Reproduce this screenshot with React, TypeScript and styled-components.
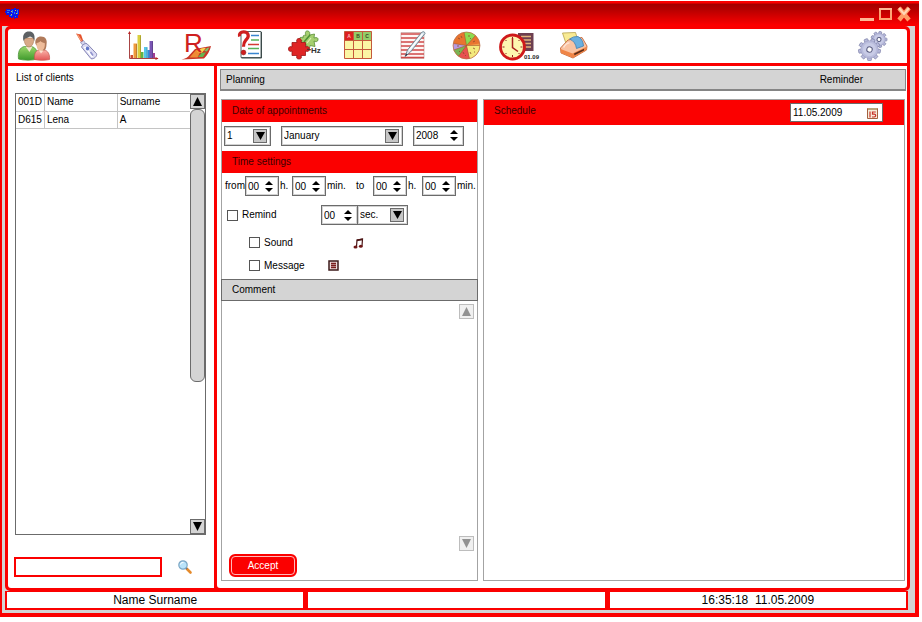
import React from "react";
import styled, { createGlobalStyle } from "styled-components";

const RED = "#fb0000";
const GREY = "#d4d4d4";
const LINE = "#6b6b6b";
const SOFT = "#a3a3a3";

const GlobalStyle = createGlobalStyle`
  *, *::before, *::after { box-sizing: border-box; }
  html, body { margin: 0; background: #fff; }
  body, button, input, select, textarea {
    font-family: "Liberation Sans", Arial, sans-serif;
    font-size: 10px;
    line-height: 12px;
    color: #000;
  }
  button { padding: 0; border: 0; background: none; cursor: pointer; }
  svg { display: block; flex: none; overflow: visible; }
`;

/* ---------- window frame ---------- */

const Page = styled.div`
  height: 100vh;
  padding: 1px 3px 5px 0;
`;

const Window = styled.div`
  display: flex;
  flex-direction: column;
  height: 100%;
  padding: 0 4px 4px 2px;
  background: ${RED};
`;

const TitleBar = styled.header`
  display: flex;
  align-items: center;
  justify-content: space-between;
  flex: none;
  height: 25px;
  margin: 0 -4px 0 -2px;
  padding: 0 8px 0 5px;
  background: linear-gradient(${RED} 2px, #a30000 3px, #b80000 9px, ${RED} 24px);
`;

const WindowControls = styled.div`
  display: flex;
  gap: 5px;
`;

const Frame = styled.div`
  display: flex;
  flex-direction: column;
  flex: 1;
  min-height: 0;
  padding: 0 5px 3px 3px;
  background: ${GREY};
`;

const Shell = styled.div`
  display: flex;
  flex-direction: column;
  flex: 1;
  min-height: 0;
  border: 3px solid ${RED};
  border-radius: 5px;
  background: ${RED};
`;

const Toolbar = styled.nav`
  display: flex;
  align-items: center;
  flex: none;
  height: 34px;
  margin-bottom: 3px;
  padding-right: 7px;
  border-radius: 3px 3px 0 0;
  background: #fff;
`;

const ToolButton = styled.button<{ $last?: boolean }>`
  display: flex;
  justify-content: center;
  width: 54px;
  margin-left: ${(p) => (p.$last ? "auto" : "0")};
`;

const Body = styled.div`
  display: grid;
  grid-template-columns: 206px 1fr;
  gap: 3px;
  flex: 1;
  min-height: 0;
`;

/* ---------- client list ---------- */

const Sidebar = styled.aside`
  display: flex;
  flex-direction: column;
  padding: 6px 8px 11px 7px;
  background: #fff;
  border-radius: 0 0 0 3px;
`;

const SidebarTitle = styled.h2`
  margin: 0 0 9px 1px;
  font-size: 10px;
  font-weight: normal;
`;

const ClientBox = styled.div`
  display: flex;
  flex: 1;
  min-height: 0;
  border: 1px solid ${LINE};
`;

const ClientTable = styled.table`
  flex: 1;
  align-self: flex-start;
  border-collapse: collapse;
  table-layout: fixed;
  th, td {
    height: 17px;
    padding: 0 2px;
    border-bottom: 1px solid #c4c4c4;
    border-right: 1px solid #c4c4c4;
    font-weight: normal;
    text-align: left;
    white-space: nowrap;
  }
  th:first-child { width: 28px; }
  th:nth-child(2) { width: 73px; }
  th:last-child { width: 73px; }
  th:last-child, td:last-child { border-right: 0; }
`;

const ScrollTrack = styled.div`
  display: flex;
  flex-direction: column;
  flex: none;
  width: 15px;
`;

const ScrollThumb = styled.div`
  height: 62%;
  margin-bottom: auto;
  border: 1px solid ${LINE};
  border-radius: 6px;
  background: ${GREY};
`;

const ArrowButton = styled.button<{ $muted?: boolean }>`
  display: grid;
  place-items: center;
  flex: none;
  width: 15px;
  height: 15px;
  border: 1px solid ${(p) => (p.$muted ? "#bdbdbd" : LINE)};
  background: ${(p) => (p.$muted ? "#f0f0f0" : GREY)};
  color: ${(p) => (p.$muted ? "#929292" : "#000")};
`;

const SearchRow = styled.form`
  display: flex;
  align-items: center;
  gap: 16px;
  margin: 22px 0 0 -1px;
`;

const SearchInput = styled.input`
  flex: 1;
  min-width: 0;
  height: 20px;
  margin: 0;
  padding: 0 4px;
  border: 2px solid ${RED};
  background: #fff;
`;

const SearchButton = styled.button`
  margin-right: 14px;
`;

/* ---------- planning area ---------- */

const Main = styled.main`
  display: flex;
  flex-direction: column;
  gap: 8px;
  min-width: 0;
  padding: 3px 1px 7px 3px;
  background: #fff;
  border-radius: 0 0 3px 3px;
`;

const PlanningBar = styled.div`
  display: flex;
  align-items: center;
  justify-content: space-between;
  flex: none;
  height: 22px;
  padding: 0 42px 0 5px;
  border: 1px solid #858585;
  border-bottom-width: 2px;
  background: ${GREY};
`;

const Columns = styled.div`
  display: grid;
  grid-template-columns: 257px 1fr;
  gap: 5px;
  flex: 1;
  min-height: 0;
  padding: 0 1px;
`;

const Panel = styled.section`
  display: flex;
  flex-direction: column;
  min-width: 0;
  border: 1px solid ${SOFT};
  background: #fff;
`;

const RedHeading = styled.h3`
  display: flex;
  align-items: center;
  flex: none;
  height: 22px;
  margin: 0;
  padding-left: 10px;
  background: ${RED};
  color: #3a0000;
  font-size: 10px;
  font-weight: normal;
`;

const CommentHeading = styled.h3`
  display: flex;
  align-items: center;
  flex: none;
  height: 22px;
  margin: 0 -1px;
  padding-left: 10px;
  border: 1px solid ${LINE};
  background: ${GREY};
  font-size: 10px;
  font-weight: normal;
`;

const DateRow = styled.div`
  display: flex;
  align-items: center;
  height: 29px;
  gap: 10px;
  padding: 0 13px 2px 2px;
`;

const TimeRow = styled.div`
  display: flex;
  align-items: center;
  height: 26px;
  padding-left: 3px;
`;

const TimeGroup = styled.div`
  display: flex;
  align-items: center;
  gap: 1px;
`;

const UnitLabel = styled.span<{ $w: number }>`
  width: ${(p) => p.$w}px;
  white-space: nowrap;
`;

const SelectBox = styled.div<{ $grow?: boolean; $w?: number }>`
  display: grid;
  align-items: center;
  grid-template-columns: 1fr 15px;
  flex: ${(p) => (p.$grow ? "1" : "none")};
  width: ${(p) => (p.$w ? `${p.$w}px` : "auto")};
  height: 20px;
  padding-right: 2px;
  border: 1px solid ${LINE};
  outline: 1px solid #d2d2d2;
  outline-offset: -2px;
  background: #fff;
`;

const Select = styled.select`
  grid-area: 1 / 1 / 2 / 3;
  width: 100%;
  height: 18px;
  padding: 0 16px 0 2px;
  border: 0;
  appearance: none;
  background: transparent;
`;

const SelectArrow = styled.span`
  display: grid;
  place-items: center;
  grid-area: 1 / 2;
  width: 14px;
  height: 14px;
  border: 1px solid ${LINE};
  background: #c6c6c6;
  pointer-events: none;
`;

const StepperBox = styled.div<{ $w: number }>`
  display: flex;
  align-items: center;
  flex: none;
  width: ${(p) => p.$w}px;
  height: 20px;
  padding-right: 5px;
  border: 1px solid ${LINE};
  outline: 1px solid #d2d2d2;
  outline-offset: -2px;
  background: #fff;
`;

const StepperInput = styled.input`
  flex: 1;
  width: 0;
  min-width: 0;
  height: 18px;
  padding: 0 0 0 2px;
  border: 0;
  background: transparent;
`;

const StepButtons = styled.span`
  display: flex;
  flex-direction: column;
  gap: 3px;
  button { display: block; height: 4px; }
`;

const RemindRow = styled.div`
  display: flex;
  align-items: center;
  justify-content: space-between;
  height: 32px;
  padding: 0 69px 0 5px;
`;

const Joined = styled.div`
  display: flex;
  & > * + * { margin-left: -1px; }
`;

const OptionRow = styled.div<{ $gap: number }>`
  display: flex;
  align-items: center;
  height: 23px;
  gap: ${(p) => p.$gap}px;
  padding-left: 27px;
`;

const CheckLabel = styled.label`
  display: flex;
  align-items: center;
  gap: 4px;
`;

const CheckBox = styled.input`
  appearance: none;
  width: 11px;
  height: 11px;
  margin: 0;
  border: 1px solid #555;
  background: #fff;
  &:checked { background: ${RED}; }
`;

const OptionList = styled.div`
  padding-bottom: 2px;
`;

const CommentArea = styled.div`
  display: flex;
  flex: 1;
  min-height: 0;
  padding: 3px 3px 30px 3px;
`;

const CommentText = styled.textarea`
  flex: 1;
  min-width: 0;
  padding: 2px;
  border: 0;
  resize: none;
  background: transparent;
`;

const CommentScroll = styled.div`
  display: flex;
  flex-direction: column;
  justify-content: space-between;
`;

const FormFooter = styled.div`
  display: flex;
  flex: none;
  margin-top: -27px;
  padding: 0 0 3px 7px;
`;

const AcceptButton = styled.button`
  width: 68px;
  height: 23px;
  border: 2px solid ${RED};
  border-radius: 6px;
  outline: 1px solid #ffb9b9;
  outline-offset: -3px;
  background: ${RED};
  color: #fff;
`;

const ScheduleHeader = styled.div`
  display: flex;
  align-items: flex-start;
  justify-content: space-between;
  flex: none;
  height: 25px;
  padding: 3px 21px 3px 0;
  background: ${RED};
`;

const ScheduleTitle = styled.h3`
  margin: 2px 0 0 10px;
  color: #3a0000;
  font-size: 10px;
  font-weight: normal;
`;

const DateField = styled.div`
  display: flex;
  align-items: center;
  width: 93px;
  height: 19px;
  padding-right: 4px;
  border: 1px solid ${LINE};
  background: #fff;
`;

/* ---------- status bar ---------- */

const StatusBar = styled.footer`
  display: grid;
  grid-template-columns: 1fr 1fr 1fr;
  gap: 5px;
  flex: none;
  height: 19px;
  margin-right: 2px;
  padding: 1px 2px 2px 2px;
  background: ${RED};
`;

const StatusCell = styled.div`
  display: grid;
  place-items: center;
  background: #fff;
  font-size: 12px;
  line-height: 16px;
  white-space: pre;
`;

/* ---------- small glyphs ---------- */

const Triangle = ({ up, w = 9, h = 9 }: { up?: boolean; w?: number; h?: number }) => (
  <svg width={w} height={h} viewBox="0 0 8 8" preserveAspectRatio="none" fill="currentColor">
    <path d={up ? "M4 0 8 8H0Z" : "M0 0H8L4 8Z"} />
  </svg>
);

const AppLogo = () => (
  <svg width="15" height="13" viewBox="0 0 15 13" shapeRendering="crispEdges">
    <path fill="#0a16e8" d="M1 2h4v1h1V2h3V1h2v1h3v6h-1v3h-3v1H9v-2H8v1H6v-1H4V8H1V6H0V4h1z" />
    <path fill="#2c7ff0" d="M2 3h3v1H2zM2 5h2v1H2zM7 3h1v3H7zM9 5h1v2H9zM12 3h1v4h-1zM5 8h2v1H5zM10 9h1v1h-1z" />
    <path fill="#d7cf45" d="M6 4h1v1H6zM10 3h1v1h-1zM11 6h1v1h-1zM6 7h1v1H6z" />
  </svg>
);

const PEACH = "#ffb794";

const MinimizeIcon = () => (
  <svg width="14" height="14" viewBox="0 0 14 14">
    <path fill={PEACH} d="M0 11h14v3H0z" />
  </svg>
);
const MaximizeIcon = () => (
  <svg width="13" height="14" viewBox="0 0 13 14">
    <path fill="none" stroke="#ffa574" strokeWidth="2" d="M1 2h11v10H1z" />
    <path fill={PEACH} d="M0 1h13v2H0z" />
  </svg>
);
const CloseIcon = () => (
  <svg width="14" height="14" viewBox="0 0 14 14">
    <path stroke="#ff9c66" strokeWidth="4.4" d="M2 1 12 13M12 1 2 13" />
    <path stroke="#ffd7b8" strokeWidth="2" d="m2 1 5 6 5-6" fill="none" />
  </svg>
);

const SearchIcon = () => (
  <svg width="14" height="14" viewBox="0 0 14 14">
    <path d="m8.500 8.500 4 4" stroke="#e58a2b" strokeWidth="2.600" strokeLinecap="round" />
    <path d="m7.500 7.500 1.500 1.500" stroke="#667" strokeWidth="1.500" />
    <circle cx="5" cy="5" r="4.200" fill="#b9e3fa" stroke="#7ba6c4" strokeWidth="1.200" />
    <path d="M2.500 4.500a2.500 2.500 0 0 1 3-2" stroke="#fff" fill="none" />
  </svg>
);

const MusicIcon = () => (
  <svg width="11" height="12" viewBox="0 0 11 12">
    <path d="M3.500 9.500 4 3l5.500-1-.5 7" fill="none" stroke="#4c1515" strokeWidth="1.200" />
    <path d="m3.800 2.500 5.900-1v1.800l-5.900 1z" fill="#4c1515" />
    <ellipse cx="2.500" cy="10" rx="2" ry="1.600" fill="#6d1717" />
    <ellipse cx="7.800" cy="9.300" rx="1.900" ry="1.500" fill="#6d1717" />
  </svg>
);

const MessageIcon = () => (
  <svg width="11" height="11" viewBox="0 0 11 11">
    <path d="M1 1h9v9H1z" fill="#ecdcdc" stroke="#3d1a1a" strokeWidth="1.500" />
    <path d="M3 3.500h5M3 5.500h5M3 7.500h5" stroke="#7b1f1f" strokeWidth="1.400" />
  </svg>
);

const CalendarIcon = () => (
  <svg width="11" height="12" viewBox="0 0 11 12">
    <path d="M.5 1.500h10v10H.5z" fill="#f6ecd9" stroke="#a5603f" />
    <path d="M1 1h9v2H1z" fill="#b9a57b" />
    <path d="M3 4.500v6M8.800 5H5.500v2.200h1.700q1.500 0 1.500 1.400T7.200 10H5" fill="none" stroke="#c9322a" strokeWidth="1.200" />
  </svg>
);

/* ---------- toolbar icons ---------- */

const ToolSvg = ({ children }: { children: React.ReactNode }) => (
  <svg width="44" height="32" viewBox="0 0 44 32">{children}</svg>
);

const ClientsIcon = () => (
  <ToolSvg>
    <defs>
      <linearGradient id="cg" x2="0" y2="1"><stop stopColor="#9ad66a" /><stop offset="1" stopColor="#3f9a2c" /></linearGradient>
      <linearGradient id="cr" x2="0" y2="1"><stop stopColor="#fbb3a8" /><stop offset="1" stopColor="#e25757" /></linearGradient>
    </defs>
    <path d="M5.500 29c-.8-7 1-11.500 6-12.500h7c4.500 1 6.500 5 6 12.500-5 1.500-14 1.500-19 0z" fill="url(#cg)" stroke="#4c953b" strokeWidth=".8" />
    <path d="m12.500 16.500 4 5.500 3-5.500z" fill="#f3e8cf" />
    <path d="M11 8c0 5 2 9 5 9s5-4 5-9z" fill="#d8a988" stroke="#9c6b43" strokeWidth=".5" />
    <path d="M10.500 11C9 4 12 1.500 16 1.500S22.500 4 21.300 11C20.500 8 19 7 17 6.500 14 8.500 12 7.500 10.500 11z" fill="#5c6063" />
    <path d="M21.500 29.500c-.5-5.500 1-9 4.500-9.500h5c4 .5 6 4.500 5.500 9.500-4 1-11 1-15 0z" fill="url(#cr)" stroke="#c65750" strokeWidth=".7" />
    <path d="M22.500 14C21.500 9 24.500 6.500 28 6.500c4.500 0 6.500 3.500 5.500 8 0 3-1 5-1.500 5.500l-4 1z" fill="#b07a5a" />
    <path d="M23.500 13c-.3 5 1.700 8 4 8s5-3 4.200-8c-2-.2-3.500-1-4.200-2-.7 1.200-2 1.800-4 2z" fill="#eebc9a" />
    <path d="m26 20.500 2 3 2.500-3z" fill="#fbe3d0" />
  </ToolSvg>
);

const PenIcon = () => (
  <ToolSvg>
    <path d="m9 3.500 5 1 2.500 7-2 1.200z" fill="#e4512b" />
    <path d="m10.500 4.500 4 6.500" stroke="#f6a57e" strokeWidth="1.200" />
    <path d="m13.500 12.500 3-2 2.500 3.500-2.500 2z" fill="#d6d7ee" stroke="#8585b5" strokeWidth=".7" />
    <path d="M14.500 17c1-2.500 3.500-4 5.500-3.300l9.500 10c1 2.300-2.500 5.800-5.500 5z" fill="#dcdcf4" stroke="#8484b4" strokeWidth="1" />
    <path d="m17.500 17 8 10" stroke="#fff" strokeWidth="2" />
    <ellipse cx="20.500" cy="18.500" rx="1.700" ry="2" fill="#6276c9" />
    <path d="m23.500 22 2.500 3.500" stroke="#8f92cc" strokeWidth="1.600" />
  </ToolSvg>
);

const ChartIcon = () => (
  <ToolSvg>
    <path d="M8.500 2v26.500H37" stroke="#a84444" fill="none" />
    <path d="m7 4 1.500-3L10 4zM34.500 27l3 1.500-3 1.500z" fill="#b22" />
    <path d="M9.500 25h2.500v3H9.500z" fill="#cf4b2f" />
    <path d="M12.500 13.500H16V28h-3.500z" fill="#ef9b3c" />
    <path d="M16.500 5H20v23h-3.500z" fill="#d9cf3e" />
    <path d="M20 22h2.500v6H20z" fill="#5cb54a" />
    <path d="M23 17h3.500v11H23z" fill="#56c6e9" />
    <path d="M26.500 20H29v8h-2.500z" fill="#2f8fd8" />
    <path d="M28.500 11H32v17h-3.500z" fill="#7a55b4" />
    <path d="M32 23h2v5h-2z" fill="#a23d91" />
    <path d="M15.500 14v14M19.500 5.500V28M26 17.500V28M31.500 11.500V28" stroke="#0003" />
  </ToolSvg>
);

const ReportIcon = () => (
  <ToolSvg>
    <path d="M6.500 29.500q6-1 8.500-5l5-5.500 16-3q-1.500 7-7 12.500z" fill="#c83526" />
    <path d="m14.500 27.500 6.500-7.500 5.500-1-4 8.500z" fill="#ef8b33" />
    <path d="m22 22 4-3.500 5-.8-4 5z" fill="#f7d44d" />
    <path d="m23 27 3.500-4 4.500-.8-3 4.800z" fill="#63b551" />
    <path d="m29 21 3-3 2.500-.5-2.500 4z" fill="#7fc06b" />
    <text x="9" y="22" fontSize="26" fill="#cf2020" fontFamily="Liberation Sans, sans-serif">R</text>
  </ToolSvg>
);

const QuestionIcon = () => (
  <ToolSvg>
    <path d="M12 1.500h20v26H12z" fill="#fff" stroke="#566" />
    <path d="M32.500 2v26H12.500" fill="none" stroke="#3c4a4a" />
    <path d="M22 5.500h8M19 23.500h11" stroke="#3a86d0" strokeWidth="1.400" />
    <path d="M22 10h8M19 18.500h11" stroke="#57b257" strokeWidth="1.400" />
    <path d="M19 14.500h11" stroke="#d63a33" strokeWidth="1.500" />
    <path d="M10.500 6.500C9.500 3.500 12 1.800 14.500 1.800c4.500 0 6 4 3.500 7-2.500 3-3.500 3-3.500 8" fill="none" stroke="#cf1f1f" strokeWidth="3.200" />
    <circle cx="14.500" cy="22.500" r="2.400" fill="#cf1f1f" stroke="#871010" strokeWidth=".5" />
  </ToolSvg>
);

const PuzzleIcon = () => (
  <ToolSvg>
    <path d="M20 6c1.500-1 2-1 3-.5C21.500 2 23 .5 25 1s2 2.500 1.500 4l5-1-.5 4c3-1 4.500 0 4 2s-2.500 2-4 1l1 5.500-5-1c0 2.500-1 3.500-2.500 3s-1.500-2-.5-3.500l-6-1 1-3.500c-2 .5-3-.5-2.500-2s2-1.500 3.500-.5z" fill="#a5cf70" stroke="#598d36" strokeWidth=".8" />
    <path d="m21 12 6-7" stroke="#4c9135" strokeWidth="1.600" />
    <path d="m24 13 4-5" stroke="#dfefb8" strokeWidth="1.200" />
    <path d="M9 12.500h5c-1-2.500 0-4 2-4s3 1.500 2 4h4.500v4.500c2.500-1 4 0 4 2s-1.500 3-4 2v4.500H18c1 2.500 0 3.500-2 3.500s-3-1-2-3.500H9V21c-2 1-3.500 0-3.500-2s1.500-3 3.500-2z" fill="#df2525" stroke="#9c1515" strokeWidth=".8" />
    <text x="28" y="23" fontSize="8" fontWeight="bold" fill="#333" fontFamily="Liberation Sans, sans-serif">Hz</text>
    <path d="M24 19.500q1-1 2 0t2 0" stroke="#333" fill="none" />
  </ToolSvg>
);

const TableIcon = () => (
  <ToolSvg>
    <path d="M7.500 1.500h27v27h-27z" fill="#fbf6a4" />
    <path d="M7.500 1.500h9v9h-9z" fill="#dd1f1f" />
    <path d="M16.500 1.500h18v9h-18z" fill="#93cd68" />
    <path d="M7.500 1.500h27v27h-27zM16.500 1.500v27M25.500 1.500v27M7.500 10.500h27M7.500 19.500h27" fill="none" stroke="#c45a3c" />
    <g fontSize="5" fontWeight="bold" fill="#3b4a22" textAnchor="middle" fontFamily="Liberation Sans, sans-serif">
      <text x="12" y="8" fill="#fbb">A</text>
      <text x="21" y="8">B</text>
      <text x="30" y="8">C</text>
    </g>
  </ToolSvg>
);

const NotesIcon = () => (
  <ToolSvg>
    <path d="M10 2.500h23v26H10z" fill="#fff6f4" stroke="#c9a7a4" strokeWidth=".8" />
    <path d="M10 4h23M10 8h23M10 12h23M10 16h23M10 20h23M10 24h23M10 27.500h23" stroke="#cf4a48" strokeWidth="1.400" />
    <path d="M14 26.500 16.500 20 30.500 2.500q3-2 3.500 1L19.500 22z" fill="#d9e7ef" stroke="#667f8c" strokeWidth=".9" />
    <path d="M18 20.500 31.500 4" stroke="#fff" strokeWidth="1.200" />
    <path d="m14 26.500 1.200-3 1.600 1.200z" fill="#334" />
  </ToolSvg>
);

const WheelIcon = () => (
  <ToolSvg>
    <circle cx="21.500" cy="15.500" r="13.500" fill="#e9742f" />
    <path d="M21.500 15.500 19 2.200a13.500 13.500 0 0 1 11.500 3.300z" fill="#8cdc50" />
    <path d="m21.500 15.500 13.300-2a13.500 13.500 0 0 1-1.300 4z" fill="#f1a04a" />
    <path d="m21.500 15.500 13.300 0a13.500 13.500 0 0 1-10.300 13.200z" fill="#f3e97c" />
    <path d="m21.500 15.500 3 13.200a13.500 13.500 0 0 1-11-2.500z" fill="#e85050" />
    <path d="m21.500 15.500-8 10.700A13.500 13.500 0 0 1 8.700 20z" fill="#79b453" />
    <path d="M21.500 15.500 8.700 20a13.500 13.500 0 0 1-.3-6.500z" fill="#b79be2" />
    <path d="M21.500 15.500 19 2.200M21.500 15.500l9-10M21.500 15.500h13.300M21.500 15.500l3 13.200M21.500 15.500l-8 10.700M21.500 15.500 8.700 20M21.500 15.500l-13-2" stroke="#a2582f" strokeWidth=".6" />
    <path d="m13 8 2 1M16 6l1 2M23 6h2M25 9l1-1M28 12l2-1M28 18l2 1M25 22l1 2M29 22h1M18 22l1 2M20 26l1-1M14 21l1 1M12 16h2" stroke="#8b4c2c" strokeWidth=".8" />
    <circle cx="21.500" cy="15.500" r="13.500" fill="none" stroke="#b9704d" strokeWidth=".7" />
  </ToolSvg>
);

const ClockIcon = () => (
  <ToolSvg>
    <path d="M19 3h15.500v18H19z" fill="#6d3f50" />
    <path d="M22 6.500h10M22 10h10M22 13.500h10M22 17h10" stroke="#e2b47c" strokeWidth="1.500" />
    <circle cx="13.500" cy="17" r="12" fill="#fdf6b0" stroke="#cf1a1a" strokeWidth="2.800" />
    <path d="M13.500 7v2M13.500 25v2M3.500 17h2M21.500 17h2M6.500 10l1 1M20.500 10l-1 1M6.500 24l1-1M20.500 24l-1-1" stroke="#8d2020" />
    <path d="M13.500 8v9.500l5.500 4" fill="none" stroke="#a81e1e" strokeWidth="1.500" />
    <text x="25" y="29" fontSize="6" fontWeight="bold" fill="#222" fontFamily="Liberation Sans, sans-serif">01.09</text>
  </ToolSvg>
);

const PrinterIcon = () => (
  <ToolSvg>
    <path d="m9.500 3 13-.5 2.500 8-12 3z" fill="#f8eb94" stroke="#b5a14c" strokeWidth=".8" />
    <path d="M7.500 18 15 10l14-2.500 5 8.500-.5 4L20 28 8 23z" fill="#fac3a2" stroke="#c4683a" strokeWidth=".9" />
    <path d="m7.500 19 12 4.500 14.500-7-.5 3.500L20 27.800 8 23z" fill="#f08546" />
    <path d="m21 23.500 10-4.700v1.800l-9.500 4.600z" fill="#5c2c18" />
    <path d="M16.500 9q4-3 8.500-2.500 5 2.500 5.500 9.500l-7 2.500q-1-7-7-9.500z" fill="#6ab0e0" stroke="#3f7fb4" strokeWidth=".8" />
    <path d="M10.500 17.500q3-5 6-4.500" stroke="#fde4d4" fill="none" strokeWidth="1.500" />
  </ToolSvg>
);

const Gear = ({ cx, cy, r, turn }: { cx: number; cy: number; r: number; turn: number }) => (
  <g transform={`translate(${cx} ${cy}) rotate(${turn})`}>
    {[0, 40, 80, 120, 160, 200, 240, 280, 320].map((a) => (
      <rect key={a} x={-r * 0.17} y={-r} width={r * 0.34} height={r * 0.5} rx=".6" transform={`rotate(${a})`} fill="#b9bcdc" stroke="#7c7fa8" strokeWidth=".7" />
    ))}
    <circle r={r * 0.8} fill="#b9bcdc" stroke="#8d90b8" strokeWidth=".4" />
    <circle r={r * 0.6} fill="#c8cbe6" />
    <circle r={r * 0.25} fill="#fff" stroke="#595c80" />
  </g>
);

const GearsIcon = () => (
  <ToolSvg>
    <Gear cx={28} cy={9.5} r={8} turn={10} />
    <Gear cx={18.5} cy={19.5} r={11} turn={20} />
  </ToolSvg>
);

const tools: [string, () => React.JSX.Element][] = [
  ["Clients", ClientsIcon],
  ["Probe", PenIcon],
  ["Chart", ChartIcon],
  ["Results", ReportIcon],
  ["Questionnaire", QuestionIcon],
  ["Frequencies", PuzzleIcon],
  ["Table", TableIcon],
  ["Notes", NotesIcon],
  ["Wheel", WheelIcon],
  ["Planning", ClockIcon],
  ["Print", PrinterIcon],
];

/* ---------- controls ---------- */

const Stepper = ({ label, value, width }: { label: string; value: string; width: number }) => (
  <StepperBox $w={width}>
    <StepperInput aria-label={label} defaultValue={value} />
    <StepButtons>
      <button type="button" aria-label={`${label} up`}><Triangle up w={8} h={4} /></button>
      <button type="button" aria-label={`${label} down`}><Triangle w={8} h={4} /></button>
    </StepButtons>
  </StepperBox>
);

const DropDown = ({ label, value, width, grow }: { label: string; value: string; width?: number; grow?: boolean }) => (
  <SelectBox $w={width} $grow={grow}>
    <Select aria-label={label} defaultValue={value}>
      <option>{value}</option>
    </Select>
    <SelectArrow><Triangle w={9} h={8} /></SelectArrow>
  </SelectBox>
);

const Check = ({ label }: { label: string }) => (
  <CheckLabel>
    <CheckBox type="checkbox" />
    {label}
  </CheckLabel>
);

export default function App() {
  return (
    <Page>
      <GlobalStyle />
      <Window>
        <TitleBar>
          <AppLogo />
          <WindowControls>
            <button aria-label="Minimize"><MinimizeIcon /></button>
            <button aria-label="Maximize"><MaximizeIcon /></button>
            <button aria-label="Close"><CloseIcon /></button>
          </WindowControls>
        </TitleBar>
        <Frame>
          <Shell>
            <Toolbar>
              {tools.map(([name, Icon]) => (
                <ToolButton key={name} aria-label={name}><Icon /></ToolButton>
              ))}
              <ToolButton $last aria-label="Settings"><GearsIcon /></ToolButton>
            </Toolbar>
            <Body>
              <Sidebar>
                <SidebarTitle>List of clients</SidebarTitle>
                <ClientBox>
                  <ClientTable>
                    <thead>
                      <tr><th>001D</th><th>Name</th><th>Surname</th></tr>
                    </thead>
                    <tbody>
                      <tr><td>D615</td><td>Lena</td><td>A</td></tr>
                    </tbody>
                  </ClientTable>
                  <ScrollTrack>
                    <ArrowButton aria-label="Scroll up"><Triangle up /></ArrowButton>
                    <ScrollThumb />
                    <ArrowButton aria-label="Scroll down"><Triangle /></ArrowButton>
                  </ScrollTrack>
                </ClientBox>
                <SearchRow>
                  <SearchInput aria-label="Search clients" />
                  <SearchButton type="button" aria-label="Search"><SearchIcon /></SearchButton>
                </SearchRow>
              </Sidebar>
              <Main>
                <PlanningBar>
                  <span>Planning</span>
                  <span>Reminder</span>
                </PlanningBar>
                <Columns>
                  <Panel>
                    <RedHeading>Date of appointments</RedHeading>
                    <DateRow>
                      <DropDown label="Day" value="1" width={47} />
                      <DropDown label="Month" value="January" grow />
                      <Stepper label="Year" value="2008" width={51} />
                    </DateRow>
                    <RedHeading>Time settings</RedHeading>
                    <TimeRow>
                      <UnitLabel $w={20}>from</UnitLabel>
                      <TimeGroup>
                        <Stepper label="From hours" value="00" width={34} />
                        <UnitLabel $w={11}>h.</UnitLabel>
                        <Stepper label="From minutes" value="00" width={34} />
                        <UnitLabel $w={28}>min.</UnitLabel>
                        <UnitLabel $w={16}>to</UnitLabel>
                        <Stepper label="To hours" value="00" width={34} />
                        <UnitLabel $w={13}>h.</UnitLabel>
                        <Stepper label="To minutes" value="00" width={34} />
                        <UnitLabel $w={18}>min.</UnitLabel>
                      </TimeGroup>
                    </TimeRow>
                    <RemindRow>
                      <Check label="Remind" />
                      <Joined>
                        <Stepper label="Remind before" value="00" width={37} />
                        <DropDown label="Unit" value="sec." width={51} />
                      </Joined>
                    </RemindRow>
                    <OptionList>
                      <OptionRow $gap={60}><Check label="Sound" /><MusicIcon /></OptionRow>
                      <OptionRow $gap={23}><Check label="Message" /><MessageIcon /></OptionRow>
                    </OptionList>
                    <CommentHeading>Comment</CommentHeading>
                    <CommentArea>
                      <CommentText aria-label="Comment" />
                      <CommentScroll>
                        <ArrowButton $muted aria-label="Scroll comment up"><Triangle up /></ArrowButton>
                        <ArrowButton $muted aria-label="Scroll comment down"><Triangle /></ArrowButton>
                      </CommentScroll>
                    </CommentArea>
                    <FormFooter>
                      <AcceptButton type="button">Accept</AcceptButton>
                    </FormFooter>
                  </Panel>
                  <Panel>
                    <ScheduleHeader>
                      <ScheduleTitle>Schedule</ScheduleTitle>
                      <DateField>
                        <StepperInput aria-label="Schedule date" defaultValue="11.05.2009" />
                        <button type="button" aria-label="Open calendar"><CalendarIcon /></button>
                      </DateField>
                    </ScheduleHeader>
                  </Panel>
                </Columns>
              </Main>
            </Body>
          </Shell>
          <StatusBar>
            <StatusCell>Name Surname</StatusCell>
            <StatusCell />
            <StatusCell>{"16:35:18  11.05.2009"}</StatusCell>
          </StatusBar>
        </Frame>
      </Window>
    </Page>
  );
}
